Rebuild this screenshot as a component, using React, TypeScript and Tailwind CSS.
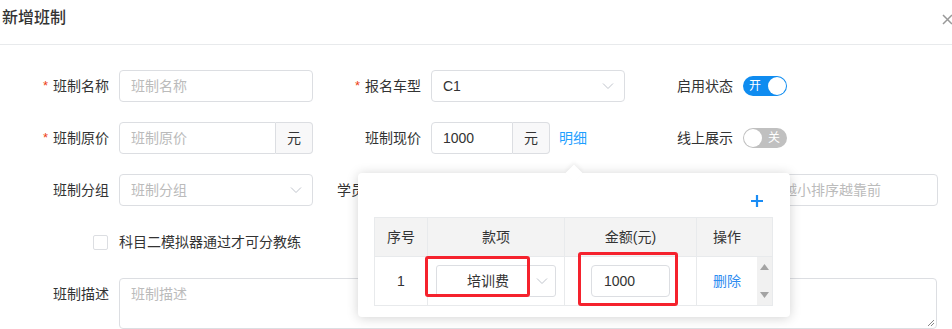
import React from "react";

const font = { fontFamily: '"Liberation Sans", "Noto Sans CJK SC", sans-serif' };

function Label({ text, required }: { text: string; required?: boolean }) {
  return (
    <div className="w-[118px] h-[32px] pr-[10px] flex items-center justify-end text-[14px] text-[#333] shrink-0">
      {required && <span className="text-[#ed4014] mr-[5px] text-[13px]">*</span>}
      {text}
    </div>
  );
}

function Chevron({ className }: { className?: string }) {
  return (
    <svg className={className} width="12" height="8" viewBox="0 0 12 8" fill="none">
      <path d="M1 1.5l5 5 5-5" stroke="#c0c4cc" strokeWidth="1" />
    </svg>
  );
}

function Select({ value, placeholder, width = "w-[194px]" }: { value?: string; placeholder?: string; width?: string }) {
  return (
    <div className={`${width} h-[32px] border border-[#dcdee2] rounded-[4px] flex items-center justify-between pl-[11px] pr-[10px] text-[14px]`}>
      <span className={value ? "text-[#333]" : "text-[#bbb]"}>{value ?? placeholder}</span>
      <Chevron />
    </div>
  );
}

function Input({ value, placeholder, width = "w-[194px]" }: { value?: string; placeholder?: string; width?: string }) {
  return (
    <div className={`${width} h-[32px] border border-[#dcdee2] rounded-[4px] flex items-center px-[11px] text-[14px]`}>
      <span className={value ? "text-[#333]" : "text-[#bbb]"}>{value ?? placeholder}</span>
    </div>
  );
}

function AddonInput({ value, placeholder, width }: { value?: string; placeholder?: string; width: string }) {
  return (
    <div className="flex h-[32px] text-[14px]">
      <div className={`${width} border border-[#dcdee2] rounded-l-[4px] flex items-center px-[11px]`}>
        <span className={value ? "text-[#333]" : "text-[#bbb]"}>{value ?? placeholder}</span>
      </div>
      <div className="w-[37px] border border-l-0 border-[#dcdee2] rounded-r-[4px] bg-[#f8f8f9] flex items-center justify-center text-[#333]">
        元
      </div>
    </div>
  );
}

function Switch({ on, text }: { on: boolean; text: string }) {
  return (
    <div
      className={`w-[44px] h-[20px] rounded-full flex items-center justify-between px-[1px] text-[12px] text-white ${
        on ? "bg-[#0f8cf0]" : "bg-[#c0c0c0]"
      }`}
    >
      {on ? (
        <>
          <span className="pl-[5px]">{text}</span>
          <span className="w-[18px] h-[18px] rounded-full bg-white" />
        </>
      ) : (
        <>
          <span className="w-[18px] h-[18px] rounded-full bg-white" />
          <span className="pr-[6px]">{text}</span>
        </>
      )}
    </div>
  );
}

function Popover() {
  return (
    <div className="absolute left-[358px] top-[173px] w-[432px] h-[144px] bg-white rounded-[4px] shadow-[0_1px_12px_rgba(0,0,0,0.18)] pt-[21px] pl-[16px] pr-[17px]">
      <div className="absolute left-[210px] top-[-6px] w-[12px] h-[12px] bg-white rotate-45 shadow-[-2px_-2px_4px_rgba(0,0,0,0.05)]" />
      <div className="flex justify-end h-[23px] pr-[9px]">
        <svg width="14" height="14" viewBox="0 0 14 14">
          <path d="M7 1v12M1 7h12" stroke="#1a8cf5" strokeWidth="2.2" />
        </svg>
      </div>
      <div className="border border-[#e8eaec] text-[14px] text-[#333]">
        <div className="flex h-[39px] bg-[#f3f3f3] border-b border-[#e8eaec]">
          <div className="w-[53px] flex items-center justify-center border-r border-[#e8eaec]">序号</div>
          <div className="w-[137px] flex items-center justify-center border-r border-[#e8eaec]">款项</div>
          <div className="w-[132px] flex items-center justify-center border-r border-[#e8eaec]">金额(元)</div>
          <div className="w-[60px] flex items-center justify-center">操作</div>
          <div className="flex-1" />
        </div>
        <div className="flex h-[48px]">
          <div className="w-[53px] flex items-center justify-center border-r border-[#e8eaec]">1</div>
          <div className="w-[137px] flex items-center justify-center border-r border-[#e8eaec]">
            <div className="w-[120px] h-[32px] border border-[#dcdee2] rounded-[3px] flex items-center justify-between pl-[30px] pr-[7px]">
              <span>培训费</span>
              <Chevron />
            </div>
          </div>
          <div className="w-[132px] flex items-center justify-center border-r border-[#e8eaec]">
            <div className="w-[79px] h-[32px] border border-[#dcdee2] rounded-[4px] flex items-center pl-[12px]">1000</div>
          </div>
          <div className="w-[60px] flex items-center justify-center text-[#2d8cf0]">删除</div>
          <div className="flex-1 bg-[#f1f1f1] flex flex-col items-center justify-between py-[7px]">
            <svg width="9" height="6" viewBox="0 0 9 6"><path d="M4.5 0L9 6H0z" fill="#a3a3a3" /></svg>
            <svg width="9" height="6" viewBox="0 0 9 6"><path d="M0 0h9L4.5 6z" fill="#a3a3a3" /></svg>
          </div>
        </div>
      </div>
      {/* annotation boxes */}
      <div className="absolute left-[67px] top-[83px] w-[105px] h-[41px] border-[3px] border-[#f5222d] rounded-[3px]" />
      <div className="absolute left-[220px] top-[79px] w-[100px] h-[54px] border-[3px] border-[#f5222d] rounded-[3px]" />
    </div>
  );
}

export default function App() {
  return (
    <div className="relative w-[952px] h-[329px] overflow-hidden bg-white" style={font}>
      <div className="h-[45px] border-b border-[#e8eaec] flex justify-between">
        <div className="pl-[2px] pt-[7px] text-[16px] leading-[22px] text-[#333] font-medium">新增班制</div>
        <div className="pt-[14px]">
          <svg width="10" height="11" viewBox="0 0 10 11">
            <path d="M1 1l9 9M10 1l-9 9" stroke="#999" strokeWidth="1.5" />
          </svg>
        </div>
      </div>

      <div className="pt-[25px] pl-[1px] flex flex-col gap-[20px]">
        <div className="flex h-[32px]">
          <div className="flex">
            <Label text="班制名称" required />
            <Input placeholder="班制名称" />
          </div>
          <div className="flex">
            <Label text="报名车型" required />
            <Select value="C1" />
          </div>
          <div className="flex">
            <Label text="启用状态" />
            <div className="flex items-center">
              <Switch on text="开" />
            </div>
          </div>
        </div>

        <div className="flex h-[32px]">
          <div className="flex">
            <Label text="班制原价" required />
            <AddonInput placeholder="班制原价" width="w-[157px]" />
          </div>
          <div className="flex w-[312px]">
            <Label text="班制现价" />
            <AddonInput value="1000" width="w-[82px]" />
            <span className="ml-[9px] flex items-center text-[14px] text-[#1e9fff]">明细</span>
          </div>
          <div className="flex">
            <Label text="线上展示" />
            <div className="flex items-center">
              <Switch on={false} text="关" />
            </div>
          </div>
        </div>

        <div className="flex h-[32px]">
          <div className="flex">
            <Label text="班制分组" />
            <Select placeholder="班制分组" />
          </div>
          <div className="flex">
            <Label text="学员来源渠道" />
            <Select placeholder="请选择" />
          </div>
          <div className="flex">
            <Label text="排序" />
            <Input placeholder="数字越小排序越靠前" width="w-[195px]" />
          </div>
        </div>

        <div className="flex h-[32px] items-center pl-[92px] text-[14px] text-[#333]">
          <span className="w-[15px] h-[15px] border border-[#dcdee2] rounded-[2px] mr-[11px]" />
          科目二模拟器通过才可分教练
        </div>

        <div className="flex items-start">
          <Label text="班制描述" />
          <div className="relative w-[818px] h-[51px] border border-[#dcdee2] rounded-[4px] px-[11px] pt-[5px] text-[14px] text-[#bbb]">
            班制描述
            <svg className="absolute right-[1px] bottom-[1px]" width="8" height="8" viewBox="0 0 8 8">
              <path d="M7 1L1 7M7 4L4 7" stroke="#888" strokeWidth="1" />
            </svg>
          </div>
        </div>
      </div>

      <Popover />
    </div>
  );
}
